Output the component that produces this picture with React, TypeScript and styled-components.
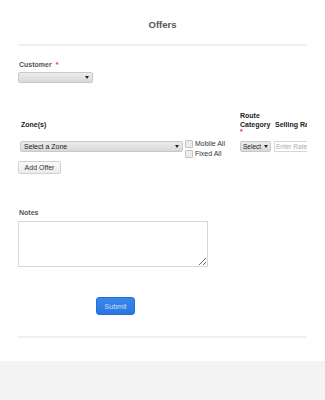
import * as React from 'react'
import styled, { createGlobalStyle } from 'styled-components'

const GlobalStyle = createGlobalStyle`
  html, body {
    margin: 0;
    padding: 0;
    background: #f3f3f3;
    font-family: "Liberation Sans", Arial, sans-serif;
  }
`

export default function App() {
  return (
    <>
      <GlobalStyle />
      <Panel>
        <Title>Offers</Title>
        <Rule gap={13} />
        <Field>
          <Label>
            Customer <Req>*</Req>
          </Label>
          <SelectBox width={75}>
            <span />
            <Arrow />
          </SelectBox>
        </Field>

        <TableWrap>
          <OfferGrid>
            <HeadCell span={2} pad={3}>Zone(s)</HeadCell>
            <HeadCell>
              Route
              <br />
              Category
              <Star>*</Star>
            </HeadCell>
            <HeadCell pad={3}>Selling Rate</HeadCell>

            <Cell>
              <SelectBox width={163}>
                <span>Select a Zone</span>
                <Arrow />
              </SelectBox>
            </Cell>
            <Cell>
              <Checks>
                <CheckRow>
                  <Box />
                  Mobile All
                </CheckRow>
                <CheckRow>
                  <Box />
                  Fixed All
                </CheckRow>
              </Checks>
            </Cell>
            <Cell>
              <SelectBox width={31} tight>
                <span>Select</span>
                <Arrow />
              </SelectBox>
            </Cell>
            <Cell>
              <RateInput placeholder="Enter Rate" />
            </Cell>
          </OfferGrid>
        </TableWrap>

        <GrayButton>Add Offer</GrayButton>

        <NotesField>
          <Label>Notes</Label>
          <Notes />
        </NotesField>

        <SubmitRow>
          <Submit>Submit</Submit>
        </SubmitRow>

        <Rule gap={21} />
      </Panel>
    </>
  )
}

const Panel = styled.div`
  background: #fff;
  padding: 0 18px 23px;
  color: #555;
`
const Title = styled.h1`
  margin: 0;
  padding-top: 19px;
  font-size: 9.5px;
  line-height: 12px;
  font-weight: bold;
  text-align: center;
  color: #555;
`
const Rule = styled.div<{ gap: number }>`
  height: 2px;
  background: #f0f0f0;
  margin-top: ${(p) => p.gap}px;
`
const Field = styled.div`
  margin-top: 14px;
`
const Label = styled.div`
  font-size: 7px;
  line-height: 10px;
  font-weight: bold;
  color: #555;
  padding-left: 1px;
`
const Req = styled.span`
  color: #e33;
  margin-left: 2px;
`
const SelectBox = styled.div<{ width: number; tight?: boolean }>`
  width: ${(p) => p.width}px;
  height: 11px;
  box-sizing: border-box;
  margin-top: 2px;
  display: flex;
  align-items: center;
  justify-content: space-between;
  padding: 0 ${(p) => (p.tight ? 2 : 3)}px;
  border: 1px solid #c8c8c8;
  border-radius: 2px;
  background: linear-gradient(#ececec, #d9d9d9);
  font-size: ${(p) => (p.tight ? 6.5 : 7)}px;
  color: #222;
  white-space: nowrap;
`
const Arrow = styled.span`
  flex: none;
  width: 0;
  height: 0;
  margin-left: 2px;
  border-left: 2px solid transparent;
  border-right: 2px solid transparent;
  border-top: 3px solid #222;
`
const TableWrap = styled.div`
  margin-top: 28px;
  overflow: hidden;
`
const OfferGrid = styled.div`
  display: grid;
  grid-template-columns: 165px 55px 34px 80px;
  align-items: center;
  row-gap: 4px;
`
const HeadCell = styled.div<{ span?: number; pad?: number }>`
  grid-column: span ${(p) => p.span || 1};
  font-size: 7px;
  line-height: 9px;
  font-weight: bold;
  color: #222;
  padding-left: ${(p) => p.pad || 2}px;
  padding-top: ${(p) => (p.pad ? 2 : 0)}px;
  white-space: nowrap;
`
const Star = styled.div`
  color: #e33;
  line-height: 5px;
  height: 6px;
`
const Cell = styled.div`
  align-self: start;
  display: flex;
  padding-left: 2px;
`
const Checks = styled.div`
  display: flex;
  flex-direction: column;
  padding-top: 1px;
  gap: 2px;
`
const CheckRow = styled.label`
  display: flex;
  align-items: center;
  gap: 2px;
  font-size: 7px;
  line-height: 8px;
  color: #333;
  white-space: nowrap;
`
const Box = styled.span`
  width: 6px;
  height: 6px;
  border: 1px solid #c4c4c4;
  border-radius: 1px;
  background: #ececec;
`
const RateInput = styled.input`
  width: 60px;
  height: 11px;
  margin-top: 2px;
  box-sizing: border-box;
  border: 1px solid #d6d6d6;
  padding: 0 1px;
  font-family: inherit;
  font-size: 6.5px;
  outline: none;
  &::placeholder {
    color: #aaa;
  }
`
const GrayButton = styled.button`
  display: block;
  margin-top: 3px;
  width: 43px;
  height: 13px;
  padding: 0;
  border: 1px solid #d2d2d2;
  border-radius: 2px;
  background: linear-gradient(#fafafa, #ececec);
  font-family: inherit;
  font-size: 7px;
  color: #333;
`
const NotesField = styled.div`
  margin-top: 34px;
`
const Notes = styled.textarea`
  display: block;
  margin-top: 3px;
  width: 190px;
  height: 46px;
  box-sizing: border-box;
  border: 1px solid #d8d8d8;
  resize: both;
  font-family: inherit;
  outline: none;
`
const SubmitRow = styled.div`
  margin-top: 30px;
  padding-left: 78px;
`
const Submit = styled.button`
  display: block;
  width: 39px;
  height: 18px;
  padding: 0;
  border: 1px solid #1f6fd6;
  border-radius: 3px;
  background: linear-gradient(#3a86ea, #2a76e0);
  color: #cfe0f8;
  font-family: inherit;
  font-size: 7px;
`
